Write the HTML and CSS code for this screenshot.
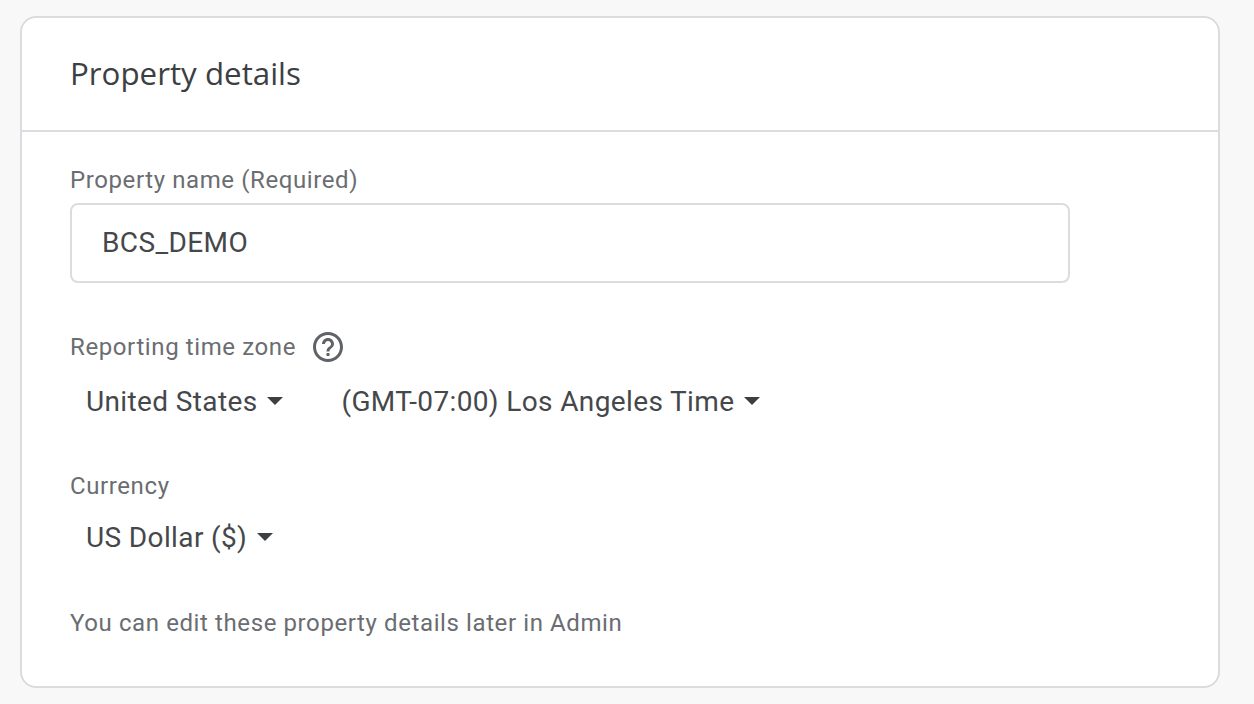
FILE: index.html
```html
<!DOCTYPE html>
<html>
<head>
<meta charset="utf-8">
<title>Property details</title>
<link rel="stylesheet" href="styles.css">
</head>
<body>
<div class="card">
  <div class="card-header">
    <h1 class="card-title">Property details</h1>
  </div>
  <div class="card-body">
    <div class="field-label name-label">Property name (Required)</div>
    <div class="text-input">BCS_DEMO</div>

    <div class="field-label zone-label">
      <span>Reporting time zone</span>
      <svg class="help-icon" viewBox="0 0 24 24" width="36" height="36">
        <path fill="#5f6368" d="M11 18h2v-2h-2v2zm1-16C6.48 2 2 6.48 2 12s4.48 10 10 10 10-4.48 10-10S17.52 2 12 2zm0 18c-4.41 0-8-3.59-8-8s3.59-8 8-8 8 3.59 8 8-3.59 8-8 8zm0-14c-2.21 0-4 1.79-4 4h2c0-1.100.9-2 2-2s2 .9 2 2c0 2-3 1.750-3 5h2c0-2.250 3-2.500 3-5 0-2.210-1.790-4-4-4z"/>
      </svg>
    </div>
    <div class="select-row zone-row">
      <div class="select country-select">United States<span class="caret"></span></div>
      <div class="select">(GMT-07:00) Los Angeles Time<span class="caret"></span></div>
    </div>

    <div class="field-label currency-label">Currency</div>
    <div class="select-row currency-row">
      <div class="select">US Dollar ($)<span class="caret"></span></div>
    </div>

    <div class="field-label hint">You can edit these property details later in Admin</div>
  </div>
</div>
</body>
</html>
```

FILE: styles.css
```css
html, body { margin: 0; padding: 0; }
body {
  width: 1254px;
  height: 704px;
  overflow: hidden;
  background: #f8f8f8;
  padding: 16px 34px 16px 20px;
  box-sizing: border-box;
  font-family: Roboto, "Liberation Sans", sans-serif;
  color: #45484b;
}
.card {
  height: 672px;
  box-sizing: border-box;
  background: #fff;
  border: 2px solid #dadce0;
  border-radius: 16px;
}
.card-header {
  height: 114px;
  box-sizing: border-box;
  padding: 0 48px 2px;
  display: flex;
  align-items: center;
  border-bottom: 2px solid #dadce0;
}
.card-title {
  margin: 0;
  font-family: "Open Sans", Roboto, sans-serif;
  font-size: 31.3px;
  font-weight: 400;
  color: #3c4043;
}
.card-body { padding: 0 48px; }
.field-label {
  font-size: 24px;
  line-height: 32px;
  letter-spacing: 0.6px;
  color: #6a6d71;
}
.name-label { margin-top: 32px; }
.text-input {
  width: 1000px;
  height: 80px;
  margin-top: 7px;
  box-sizing: border-box;
  border: 2px solid #dadce0;
  border-radius: 8px;
  padding: 0 30px 2px;
  display: flex;
  align-items: center;
  font-size: 28px;
  letter-spacing: 0.4px;
}
.zone-label {
  margin-top: 46px;
  display: flex;
  align-items: center;
  gap: 14px;
}
.help-icon { flex: none; }
.select-row {
  display: flex;
  padding-left: 16px;
  height: 44px;
  align-items: center;
}
.zone-row { margin-top: 14px; }
.currency-row { margin-top: 13px; }
.select {
  display: flex;
  align-items: center;
  font-size: 28px;
  letter-spacing: 0.37px;
  white-space: nowrap;
}
.country-select { margin-right: 58px; }
.caret {
  width: 0;
  height: 0;
  margin-left: 10px;
  border-left: 8px solid transparent;
  border-right: 8px solid transparent;
  border-top: 8px solid #3c4043;
}
.currency-label { margin-top: 47px; }
.hint { margin-top: 48px; }
```
